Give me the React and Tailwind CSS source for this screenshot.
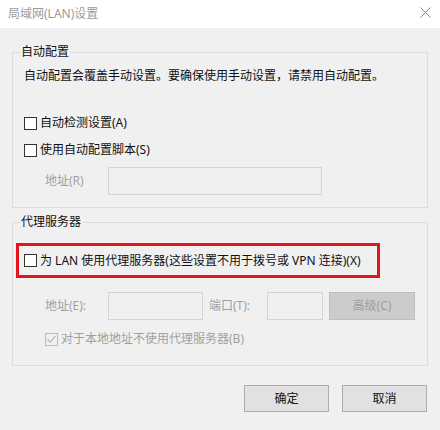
// 局域网(LAN)设置 dialog
const Check = ({ checked = false, disabled = false }) => (
  <span
    className={`flex items-center justify-center w-[13px] h-[13px] shrink-0 border ${
      disabled ? 'border-[#bcbcbc] bg-[#f0f0f0]' : 'border-[#333333] bg-white'
    }`}
  >
    {checked && (
      <svg width="11" height="11" viewBox="0 0 11 11">
        <path d="M1.5 5.5 L4.2 8.2 L9.5 2.2" fill="none" stroke="#b5b5b5" strokeWidth="1.2" />
      </svg>
    )}
  </span>
);

const Field = ({ className }) => (
  <div className={`h-[28px] border border-[#d4d4d4] bg-[#f0f0f0] ${className}`} />
);

export default function App() {
  return (
    <div
      className="w-[440px] h-[430px] bg-[#f0f0f0] text-[12px] leading-[16px] text-[#111] overflow-hidden"
      style={{ fontFamily: '"Noto Sans", "Noto Sans CJK SC", sans-serif' }}
    >
      {/* Title bar */}
      <div className="h-[28px] bg-white flex items-center justify-between pl-[8px] pr-[9px]">
        <span className="text-[#9a9a9a] text-[12px]">局域网(LAN)设置</span>
        <svg width="11" height="11" viewBox="0 0 11 11" className="-mt-[4px]">
          <path d="M0.5 0.5 L10.5 10.5 M10.5 0.5 L0.5 10.5" stroke="#8a8a8a" strokeWidth="1" />
        </svg>
      </div>

      <div className="px-[12px] pt-[16px]">
        {/* 自动配置 */}
        <fieldset className="border border-[#dcdcdc] pb-[12px]">
          <legend className="ml-[7px] px-[1px] leading-[16px]">自动配置</legend>
          <p className="mt-[8px] pl-[11px]">自动配置会覆盖手动设置。要确保使用手动设置，请禁用自动配置。</p>
          <label className="mt-[31px] pl-[11px] flex items-center gap-[3px]">
            <Check />
            <span>自动检测设置(A)</span>
          </label>
          <label className="mt-[11px] pl-[11px] flex items-center gap-[3px]">
            <Check />
            <span>使用自动配置脚本(S)</span>
          </label>
          <div className="mt-[9px] pl-[32px] flex items-center">
            <span className="w-[63px] text-[#a0a0a0]">地址(R)</span>
            <Field className="w-[214px]" />
          </div>
        </fieldset>

        {/* 代理服务器 */}
        <fieldset className="mt-[6px] border border-[#dcdcdc] pb-[18px]">
          <legend className="ml-[7px] px-[1px] leading-[16px]">代理服务器</legend>
          <div className="mt-[13px] ml-[3px] w-[364px] h-[35px] border-[3px] border-[#e3141e] pl-[5px] flex items-center gap-[3px]">
            <Check />
            <span>为 LAN 使用代理服务器(这些设置不用于拨号或 VPN 连接)(X)</span>
          </div>
          <div className="mt-[14px] pl-[32px] flex items-center">
            <span className="w-[63px] text-[#a0a0a0]">地址(E):</span>
            <Field className="w-[95px]" />
            <span className="ml-[6px] w-[58px] text-[#a0a0a0]">端口(T):</span>
            <Field className="w-[56px]" />
            <button className="ml-[6px] w-[86px] h-[28px] bg-[#cccccc] border border-[#bfbfbf] text-[#9e9e9e]">
              高级(C)
            </button>
          </div>
          <label className="mt-[11px] pl-[32px] flex items-center gap-[3px] text-[#a0a0a0]">
            <Check checked disabled />
            <span>对于本地地址不使用代理服务器(B)</span>
          </label>
        </fieldset>

        {/* Buttons */}
        <div className="mt-[19px] flex justify-end gap-[13px] pr-[1px]">
          <button className="w-[85px] h-[27px] bg-[#e1e1e1] border border-[#adadad]">确定</button>
          <button className="w-[85px] h-[27px] bg-[#e1e1e1] border border-[#adadad]">取消</button>
        </div>
      </div>
    </div>
  );
}
